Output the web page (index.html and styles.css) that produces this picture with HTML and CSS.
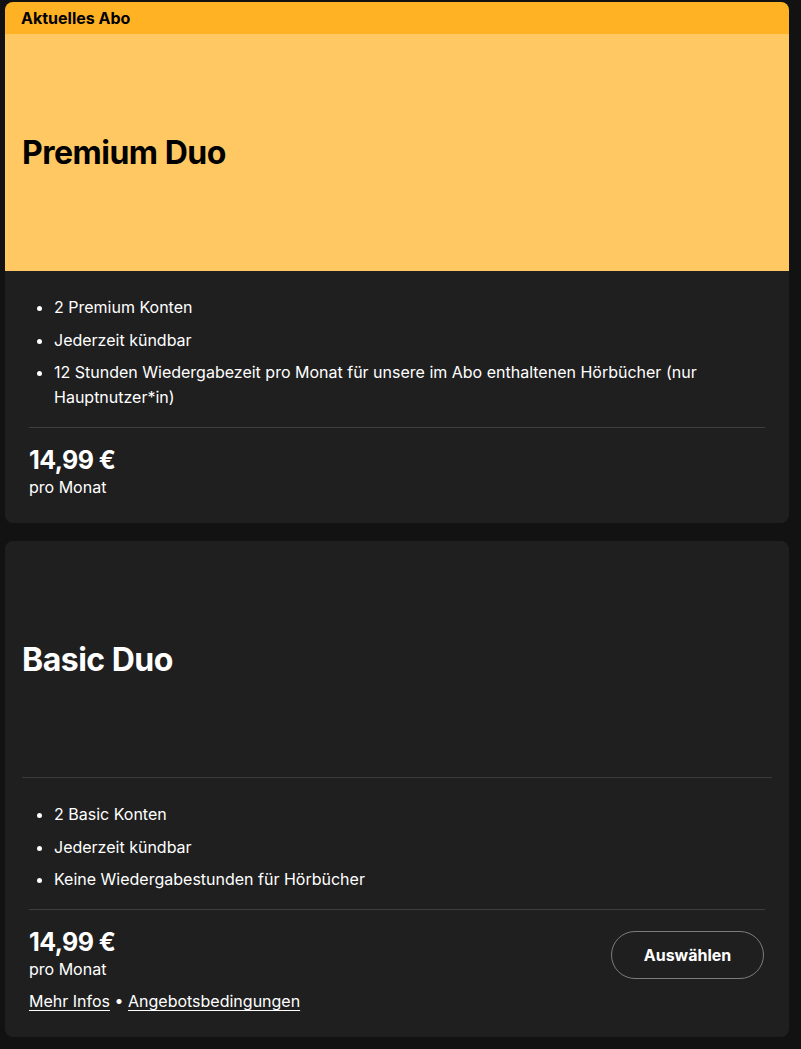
FILE: index.html
```html
<!DOCTYPE html>
<html lang="de">
<head>
<meta charset="utf-8">
<link rel="stylesheet" href="styles.css">
</head>
<body>
<main class="plans">
  <section class="card current">
    <div class="badge">Aktuelles Abo</div>
    <div class="hero hero-yellow">
      <h2 class="title">Premium Duo</h2>
    </div>
    <div class="body">
      <ul class="features">
        <li>2 Premium Konten</li>
        <li>Jederzeit kündbar</li>
        <li>12 Stunden Wiedergabezeit pro Monat für unsere im Abo enthaltenen Hörbücher (nur Hauptnutzer*in)</li>
      </ul>
      <div class="footer">
        <div class="price-block">
          <div class="price">14,99 €</div>
          <div class="period">pro Monat</div>
        </div>
      </div>
    </div>
  </section>

  <section class="card">
    <div class="hero hero-dark">
      <h2 class="title">Basic Duo</h2>
    </div>
    <div class="body body-tight">
      <ul class="features">
        <li>2 Basic Konten</li>
        <li>Jederzeit kündbar</li>
        <li>Keine Wiedergabestunden für Hörbücher</li>
      </ul>
      <div class="footer">
        <div class="price-block">
          <div class="price">14,99 €</div>
          <div class="period">pro Monat</div>
          <div class="links"><a href="#">Mehr Infos</a> • <a href="#">Angebotsbedingungen</a></div>
        </div>
        <button class="select">Auswählen</button>
      </div>
    </div>
  </section>
</main>
</body>
</html>
```
FILE: styles.css
```css
* { box-sizing: border-box; }
html, body { margin: 0; padding: 0; background: #121212; }
body {
  font-family: Inter, "Noto Sans", "Liberation Sans", sans-serif;
  color: #ffffff;
  padding: 2px 12px 0 5px;
}
.plans { display: flex; flex-direction: column; gap: 18px; }
.card {
  background: #1f1f1f;
  border-radius: 8px;
  overflow: hidden;
}
.badge {
  background: #ffb224;
  color: #000;
  font-weight: 700;
  font-size: 16px;
  height: 32px;
  line-height: 32px;
  padding: 0 16px;
}
.hero {
  height: 237px;
  display: flex;
  align-items: center;
  padding: 0 17px;
}
.hero-yellow { background: #ffc862; color: #000; }
.hero-dark { height: 236px; color: #fff; }
.title {
  margin: 0;
  font-size: 32px;
  font-weight: 700;
  letter-spacing: -0.5px;
}
.body { padding: 24px 24px 25px; }
.body-tight {
  margin: 0 17px;
  padding: 24px 7px 25px;
  border-top: 1px solid #3a3a3a;
}
.features {
  margin: 0;
  padding: 0 0 17px 25px;
  font-size: 16px;
  line-height: 25px;
  display: flex;
  flex-direction: column;
  gap: 7.5px;
  border-bottom: 1px solid #3e3e3e;
}
.footer {
  display: flex;
  justify-content: space-between;
  align-items: flex-start;
  padding-top: 17px;
}
.price {
  font-size: 25px;
  font-weight: 700;
  line-height: 31px;
  letter-spacing: -0.6px;
}
.period {
  font-size: 16px;
  line-height: 22px;
}
.links {
  margin-top: 10px;
  font-size: 16px;
  line-height: 22px;
}
.links a { color: #fff; text-decoration: underline; text-underline-offset: 3px; }
.select {
  background: transparent;
  color: #fff;
  border: 1px solid #7c7c7c;
  border-radius: 999px;
  height: 48px;
  width: 153px;
  font-family: inherit;
  font-size: 16px;
  font-weight: 700;
  margin-top: 4px;
  margin-right: 1px;
}
```
